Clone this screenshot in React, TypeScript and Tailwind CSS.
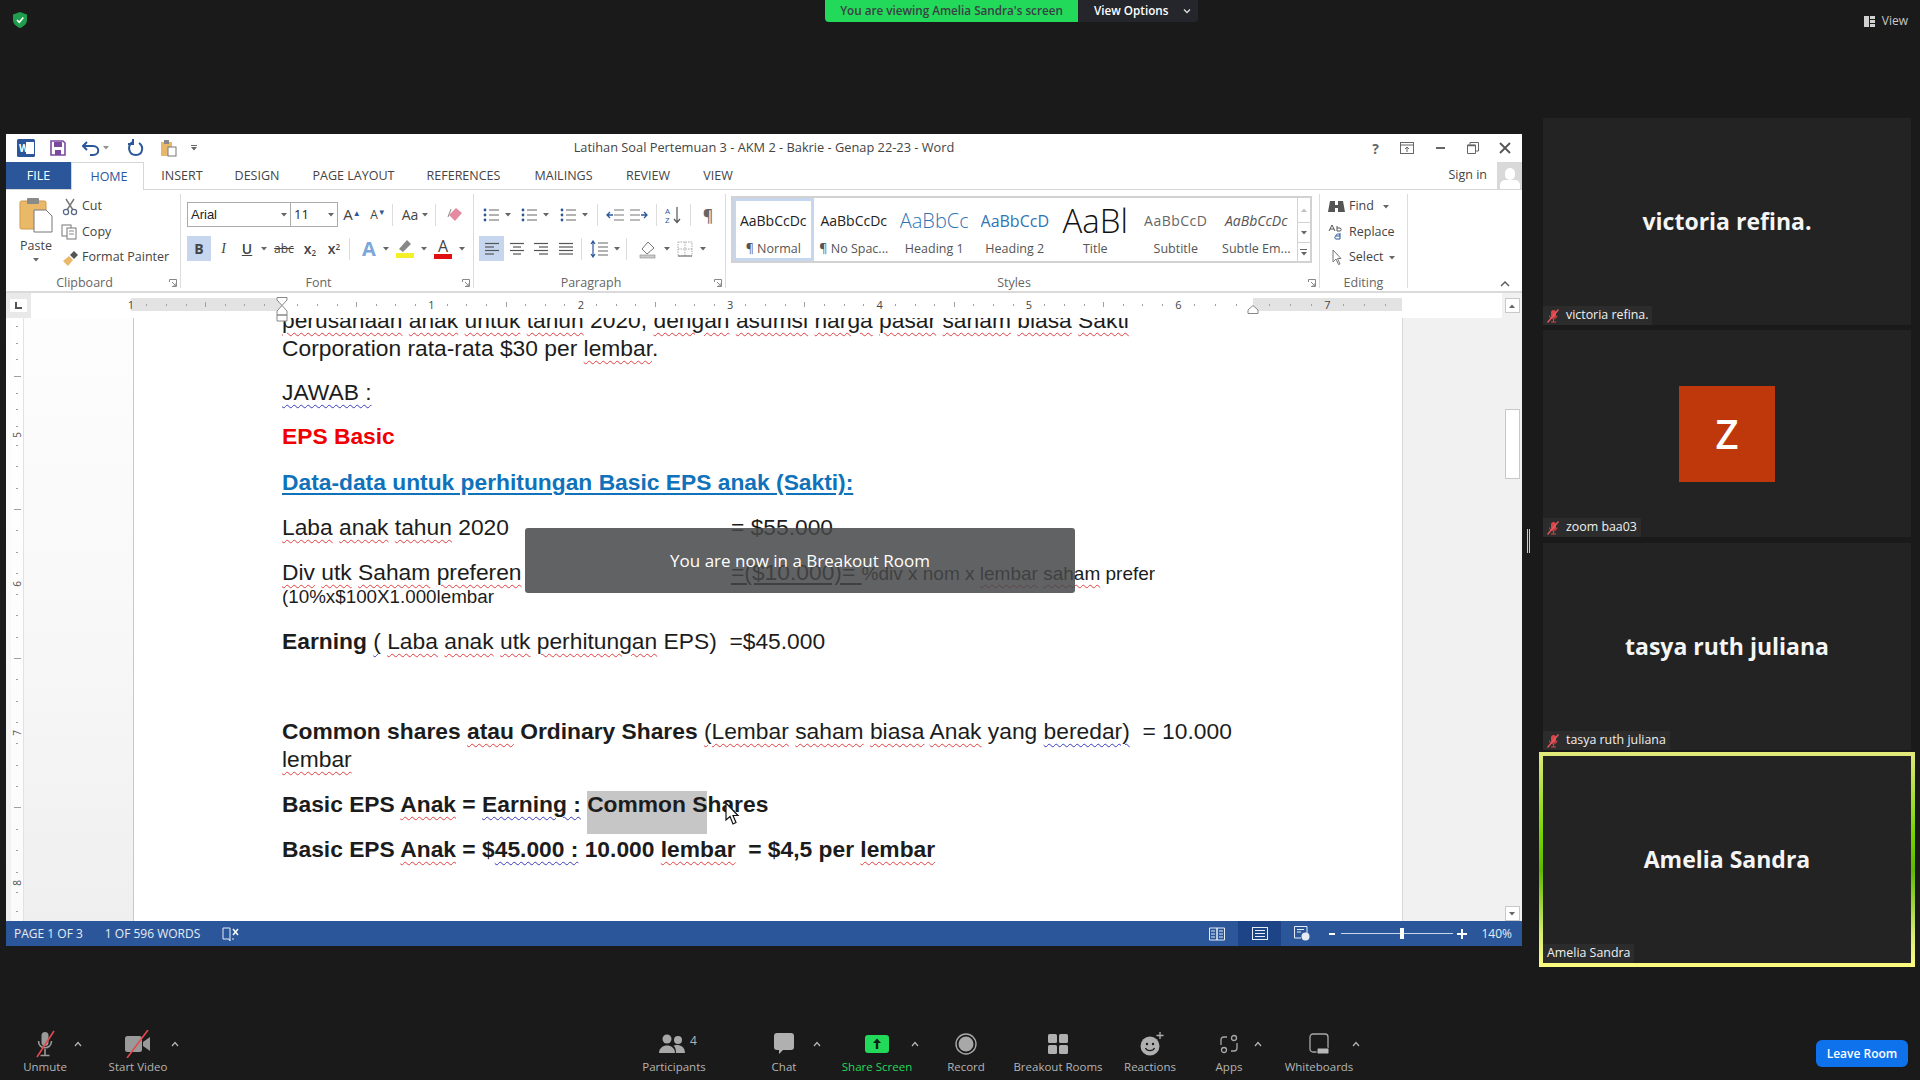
import React from "react";

const wavyRed = "underline decoration-wavy decoration-[#e04040] decoration-1 underline-offset-[4px]";
const wavyBlue = "underline decoration-wavy decoration-[#3a3ac0] decoration-1 underline-offset-[4px]";

function Caret() {
  return (
    <svg width="8" height="6" viewBox="0 0 8 6" className="shrink-0">
      <path d="M1 5 L4 1.5 L7 5" fill="none" stroke="#b5b5b5" strokeWidth="1.2" />
    </svg>
  );
}

function DropArrow({ className = "" }: { className?: string }) {
  return (
    <svg width="6" height="4" viewBox="0 0 6 4" className={className}>
      <path d="M0 0 H6 L3 3.5 Z" fill="#666" />
    </svg>
  );
}

function Slash() {
  return <path d="M21 1 L4 27" stroke="#e5484d" strokeWidth="1.6" />;
}

function MutedSmall() {
  return (
    <svg width="14" height="14" viewBox="0 0 14 14" className="shrink-0">
      <rect x="5" y="1" width="5" height="8" rx="2.5" fill="#d9454a" />
      <path d="M3.5 6.5 C3.5 11 11 11 11 6.5 M7.5 10 V13 M5 13 H10" fill="none" stroke="#d9454a" strokeWidth="1" />
      <path d="M12.5 0.5 L1.5 13.5" stroke="#e8585c" strokeWidth="1.3" />
    </svg>
  );
}

function ToolItem({ label, width, ml = "", green, children }: { label: string; width: string; ml?: string; green?: boolean; children: React.ReactNode }) {
  return (
    <div className={`flex flex-col items-center shrink-0 ${width} ${ml}`}>
      <div className="h-[24px] flex items-center justify-center">{children}</div>
      <div className={`mt-[3px] text-[11.5px] leading-[16px] whitespace-nowrap ${green ? "text-[#23d959]" : "text-[#b4b4b4]"}`}>{label}</div>
    </div>
  );
}

function Toolbar() {
  return (
    <div className="h-[60px] flex items-start pt-[12px] pl-[15px] font-['Open_Sans',sans-serif]">
      <ToolItem label="Unmute" width="w-[60px]">
        <svg width="24" height="28" viewBox="0 0 24 28">
          <rect x="8.5" y="2" width="7" height="14" rx="3.5" fill="#9a9a9a" />
          <path d="M5.5 11 C5.5 20 18.5 20 18.5 11 M12 19 V25 M7.5 25.5 H16.5" fill="none" stroke="#9a9a9a" strokeWidth="1.6" />
          <Slash />
        </svg>
      </ToolItem>
      <div className="w-[6px] h-[24px] flex items-center justify-center"><Caret /></div>
      <ToolItem label="Start Video" width="w-[66px]" ml="ml-[24px]">
        <svg width="26" height="28" viewBox="0 0 26 28">
          <rect x="0" y="6" width="17" height="16" rx="2.5" fill="#9a9a9a" />
          <path d="M18 12 L25 7 V21 L18 16 Z" fill="#9a9a9a" />
          <path d="M23 0 L2 28" stroke="#e5484d" strokeWidth="1.6" />
        </svg>
      </ToolItem>
      <div className="w-[8px] h-[24px] flex items-center justify-center"><Caret /></div>

      <ToolItem label="Participants" width="w-[90px]" ml="ml-[450px]">
        <div className="flex items-start ml-[8px]">
          <svg width="26" height="20" viewBox="0 0 26 20">
            <circle cx="8" cy="5" r="4.5" fill="#a8a8a8" />
            <circle cx="19" cy="6" r="4" fill="#a8a8a8" />
            <path d="M0 19 C0 9 16 9 16 19 Z" fill="#a8a8a8" />
            <path d="M17 19 C17 14 15.5 12.5 14.5 12 C17 10 26 10.5 26 19 Z" fill="#a8a8a8" />
          </svg>
          <span className="ml-[5px] text-[12px] leading-[14px] text-[#b4b4b4]">4</span>
        </div>
      </ToolItem>
      <ToolItem label="Chat" width="w-[50px]" ml="ml-[40px]">
        <svg width="22" height="24" viewBox="0 0 22 24">
          <path d="M4 1 H18 C20 1 21 2 21 4 V15 C21 17 20 18 18 18 H10 L6 22 V18 H4 C2 18 1 17 1 15 V4 C1 2 2 1 4 1 Z" fill="#b0b0b0" />
        </svg>
      </ToolItem>
      <div className="w-[8px] h-[24px] ml-[4px] flex items-center justify-center"><Caret /></div>
      <ToolItem label="Share Screen" width="w-[68px]" ml="ml-[22px]" green>
        <svg width="24" height="18" viewBox="0 0 24 18">
          <rect width="24" height="18" rx="3" fill="#23d959" />
          <path d="M12 3.5 L16 8 H13.2 V14 H10.8 V8 H8 Z" fill="#102018" />
        </svg>
      </ToolItem>
      <div className="w-[8px] h-[24px] flex items-center justify-center"><Caret /></div>
      <ToolItem label="Record" width="w-[40px]" ml="ml-[27px]">
        <svg width="22" height="22" viewBox="0 0 22 22">
          <circle cx="11" cy="11" r="10" fill="none" stroke="#a8a8a8" strokeWidth="1.4" />
          <circle cx="11" cy="11" r="7.5" fill="#a8a8a8" />
        </svg>
      </ToolItem>
      <ToolItem label="Breakout Rooms" width="w-[90px]" ml="ml-[27px]">
        <svg width="20" height="20" viewBox="0 0 20 20">
          <rect x="0" y="0" width="9" height="9" rx="1.5" fill="#b0b0b0" />
          <rect x="11" y="0" width="9" height="9" rx="1.5" fill="#b0b0b0" />
          <rect x="0" y="11" width="9" height="9" rx="1.5" fill="#b0b0b0" />
          <rect x="11" y="11" width="9" height="9" rx="1.5" fill="#b0b0b0" />
        </svg>
      </ToolItem>
      <ToolItem label="Reactions" width="w-[60px]" ml="ml-[17px]">
        <svg width="24" height="24" viewBox="0 0 24 24" className="ml-[3px]">
          <circle cx="10" cy="14" r="9.5" fill="#b0b0b0" />
          <circle cx="7" cy="12" r="1.2" fill="#1a1a1a" />
          <circle cx="13" cy="12" r="1.2" fill="#1a1a1a" />
          <path d="M5.5 16 C7 19.5 13 19.5 14.5 16" fill="none" stroke="#1a1a1a" strokeWidth="1.2" />
          <path d="M20 0 V7 M16.5 3.5 H23.5" stroke="#b0b0b0" strokeWidth="1.3" />
        </svg>
      </ToolItem>
      <ToolItem label="Apps" width="w-[40px]" ml="ml-[29px]">
        <svg width="18" height="20" viewBox="0 0 18 20">
          <path d="M7 3 H4 C2 3 1 4 1 6 V11 M17 9 V14 C17 16 16 17 14 17 H11" fill="none" stroke="#a8a8a8" strokeWidth="1.3" />
          <circle cx="14" cy="4" r="2.5" fill="none" stroke="#a8a8a8" strokeWidth="1.3" />
          <circle cx="4" cy="16" r="2.5" fill="none" stroke="#a8a8a8" strokeWidth="1.3" />
        </svg>
      </ToolItem>
      <div className="w-[8px] h-[24px] ml-[5px] flex items-center justify-center"><Caret /></div>
      <ToolItem label="Whiteboards" width="w-[66px]" ml="ml-[24px]">
        <svg width="21" height="22" viewBox="0 0 21 22">
          <rect x="1" y="1" width="18" height="18" rx="3" fill="none" stroke="#a8a8a8" strokeWidth="1.3" />
          <rect x="8" y="15" width="12" height="6" rx="1.5" fill="#b8b8b8" stroke="#1a1a1a" />
        </svg>
      </ToolItem>
      <div className="w-[8px] h-[24px] flex items-center justify-center"><Caret /></div>
      <div className="ml-auto mr-[12px] mt-[8px] w-[92px] h-[27px] rounded-[6px] bg-[#0e72ed] text-white text-[12px] font-semibold flex items-center justify-center">Leave Room</div>
    </div>
  );
}

function Tile({ name, children }: { name: string; children?: React.ReactNode }) {
  return (
    <div className="relative mx-[4px] h-[207px] bg-[#232323] flex items-center justify-center">
      {children ?? <div className="text-[23px] font-bold text-[#f5f5f5] -mt-[1px]">{name}</div>}
      <div className="absolute left-0 bottom-0 h-[19px] pl-[3px] pr-[4px] flex items-center gap-[6px] bg-[#2c2c2c] text-[12.4px] text-[#f0f0f0]">
        <MutedSmall />
        <span>{name}</span>
      </div>
    </div>
  );
}

function Sidebar() {
  return (
    <div className="w-[376px] flex flex-col font-['Open_Sans',sans-serif]">
      <Tile name="victoria refina." />
      <div className="mt-[5px]">
        <Tile name="zoom baa03">
          <div className="w-[96px] h-[96px] bg-[#bf380b] flex items-center justify-center text-[40px] font-semibold text-white">Z</div>
        </Tile>
      </div>
      <div className="mt-[6px]">
        <Tile name="tasya ruth juliana" />
      </div>
      <div className="mt-[2px] h-[215px] p-[4px] bg-[linear-gradient(#e2ea7c_0%,#78d400_38%,#5fb800_55%,#d8ec70_85%,#fdfd80_100%)]">
        <div className="relative h-full bg-[#232323] flex items-center justify-center">
          <div className="text-[23px] font-bold text-[#f5f5f5]">Amelia Sandra</div>
          <div className="absolute left-0 bottom-0 h-[19px] px-[4px] flex items-center bg-[#2c2c2c] text-[12.4px] text-[#f0f0f0]">Amelia Sandra</div>
        </div>
      </div>
    </div>
  );
}

function Cell({ w, children, on }: { w: string; children: React.ReactNode; on?: boolean }) {
  return <div className={`${w} h-[25px] shrink-0 flex items-center justify-center ${on ? "bg-[#c5d6ee]" : ""}`}>{children}</div>;
}

function LinesIcon({ lines }: { lines: [number, number][] }) {
  return (
    <svg width="16" height="14" viewBox="0 0 16 14">
      {lines.map(([a, b], i) => (
        <path key={i} d={`M${a} ${1.5 + i * 3.5} H${b}`} stroke="#555" strokeWidth="1.2" />
      ))}
    </svg>
  );
}

function ListIcon({ color = "#2b579a" }: { color?: string }) {
  return (
    <svg width="16" height="14" viewBox="0 0 16 14">
      <circle cx="2" cy="2" r="1.4" fill={color} />
      <circle cx="2" cy="7" r="1.4" fill={color} />
      <circle cx="2" cy="12" r="1.4" fill={color} />
      <path d="M6 2 H16 M6 7 H16 M6 12 H16" stroke="#666" strokeWidth="1.2" />
    </svg>
  );
}

function Sep({ ml = "" }: { ml?: string }) {
  return <div className={`w-px h-[22px] bg-[#dcdcdc] shrink-0 ${ml}`} />;
}

function GroupLabel({ text, launcher = true }: { text: string; launcher?: boolean }) {
  return (
    <div className={`absolute left-0 right-0 bottom-[-4px] h-[18px] text-center text-[12.5px] leading-[18px] text-[#666] ${launcher ? "pr-[17px]" : ""}`}>
      {text}
      {launcher && (
        <svg width="8" height="8" viewBox="0 0 8 8" className="absolute right-[3px] top-[5px]">
          <path d="M0.5 3 V0.5 H7.5 V7.5 H3 M3 3 L7 7 M4 7 H7 V4" fill="none" stroke="#888" />
        </svg>
      )}
    </div>
  );
}

function Clipboard() {
  return (
    <div className="relative w-[175px] h-full shrink-0 border-r border-[#dcdcdc] mt-[4px] flex pl-[12px] text-[12.5px] text-[#444]">
      <div className="w-[36px] flex flex-col items-center mt-[3px]">
        <svg width="34" height="36" viewBox="0 0 34 36">
          <rect x="1" y="4" width="26" height="28" rx="1.5" fill="#eab968" stroke="#c99a4c" />
          <rect x="8" y="1" width="12" height="6" rx="1" fill="#8a8a8a" />
          <path d="M15 13 H27 L33 19 V35 H15 Z" fill="#fff" stroke="#777" />
        </svg>
        <div className="mt-[5px] leading-[16px]">Paste</div>
        <DropArrow className="mt-[4px]" />
      </div>
      <div className="ml-[7px] flex flex-col">
        <div className="h-[25px] flex items-center gap-[3px]">
          <svg width="18" height="18" viewBox="0 0 18 18"><path d="M5 1 L12 12 M13 1 L6 12" stroke="#777" strokeWidth="1.4" /><circle cx="5" cy="14" r="2.6" fill="none" stroke="#5a6a85" strokeWidth="1.3" /><circle cx="13" cy="14" r="2.6" fill="none" stroke="#5a6a85" strokeWidth="1.3" /></svg>
          <span>Cut</span>
        </div>
        <div className="h-[26px] flex items-center gap-[3px]">
          <svg width="18" height="16" viewBox="0 0 18 16"><rect x="1" y="1" width="9" height="11" fill="#fff" stroke="#777" /><rect x="6" y="4" width="9" height="11" fill="#fff" stroke="#777" /><path d="M8 7 H13 M8 10 H13" stroke="#888" /></svg>
          <span>Copy</span>
        </div>
        <div className="h-[25px] flex items-center gap-[3px]">
          <svg width="18" height="18" viewBox="0 0 18 18"><path d="M2 12 L8 7 L12 11 L7 17 Z" fill="#eab968" /><path d="M9 6 L13 2 L17 6 L13 10 Z" fill="#555" /></svg>
          <span>Format Painter</span>
        </div>
      </div>
      <GroupLabel text="Clipboard" />
    </div>
  );
}

function FontGroup() {
  return (
    <div className="relative w-[293px] h-full shrink-0 border-r border-[#dcdcdc] mt-[4px] pl-[6px] pt-[8px] text-[#444]">
      <div className="flex items-center h-[25px]">
        <div className="w-[104px] h-[25px] border border-[#ababab] flex items-center justify-between px-[3px] text-[13px] font-['Liberation_Sans',sans-serif] text-[#222]">
          Arial <DropArrow />
        </div>
        <div className="w-[47px] h-[25px] border border-l-0 border-[#ababab] flex items-center justify-between px-[3px] text-[13px] text-[#222]">
          11 <DropArrow />
        </div>
        <Cell w="w-[28px]"><span className="text-[15px]">A<sup className="text-[8px] text-[#2b579a]">▲</sup></span></Cell>
        <Cell w="w-[24px]"><span className="text-[12px]">A<sup className="text-[8px] text-[#2b579a]">▼</sup></span></Cell>
        <Sep ml="mx-[2px]" />
        <Cell w="w-[40px]"><span className="text-[14px]">Aa</span><DropArrow className="ml-[4px]" /></Cell>
        <Sep ml="mr-[4px]" />
        <Cell w="w-[30px]">
          <svg width="16" height="18" viewBox="0 0 16 18"><path d="M2 9 L9 2 L15 7 L8 15 Z" fill="#e58ba0" /><path d="M4 3 L1 11" stroke="#888" /></svg>
        </Cell>
      </div>
      <div className="flex items-center h-[25px] mt-[9px] text-[14px]">
        <Cell w="w-[24px]" on><b>B</b></Cell>
        <Cell w="w-[25px]"><i className="font-['Liberation_Serif',serif]">I</i></Cell>
        <Cell w="w-[22px]"><u className="font-semibold">U</u></Cell>
        <Cell w="w-[12px]"><DropArrow /></Cell>
        <Cell w="w-[28px]"><span className="text-[12px] line-through">abc</span></Cell>
        <Cell w="w-[24px]"><span className="font-semibold">x<sub className="text-[8px]">2</sub></span></Cell>
        <Cell w="w-[24px]"><span className="font-semibold">x<sup className="text-[8px]">2</sup></span></Cell>
        <Sep ml="ml-[3px] mr-[6px]" />
        <Cell w="w-[26px]"><span className="text-[20px] text-[#7ba6da] font-bold">A</span></Cell>
        <Cell w="w-[8px]"><DropArrow /></Cell>
        <Cell w="w-[30px]">
          <svg width="20" height="22" viewBox="0 0 20 22"><path d="M4 11 L12 2 L16 6 L8 14 Z" fill="#888" /><rect x="1" y="15" width="18" height="5" fill="#f5ef2a" /></svg>
        </Cell>
        <Cell w="w-[8px]"><DropArrow /></Cell>
        <Cell w="w-[30px]">
          <div className="flex flex-col items-center leading-[15px]"><span className="text-[16px]">A</span><span className="w-[18px] h-[5px] bg-[#e01010]" /></div>
        </Cell>
        <Cell w="w-[8px]"><DropArrow /></Cell>
      </div>
      <GroupLabel text="Font" />
    </div>
  );
}

function ParagraphGroup() {
  return (
    <div className="relative w-[252px] h-full shrink-0 border-r border-[#dcdcdc] mt-[4px] pl-[5px] pt-[8px] text-[#444]">
      <div className="flex items-center h-[25px]">
        <Cell w="w-[24px]"><ListIcon /></Cell>
        <Cell w="w-[10px]"><DropArrow /></Cell>
        <div className="w-[4px]" />
        <Cell w="w-[24px]"><ListIcon /></Cell>
        <Cell w="w-[10px]"><DropArrow /></Cell>
        <div className="w-[5px]" />
        <Cell w="w-[24px]"><ListIcon /></Cell>
        <Cell w="w-[10px]"><DropArrow /></Cell>
        <Sep ml="ml-[7px] mr-[5px]" />
        <Cell w="w-[24px]">
          <svg width="18" height="14" viewBox="0 0 18 14"><path d="M8 2 H18 M8 7 H18 M8 12 H18" stroke="#777" /><path d="M1 7 H7 M4 4 L1 7 L4 10" fill="none" stroke="#2b579a" strokeWidth="1.3" /></svg>
        </Cell>
        <Cell w="w-[24px]">
          <svg width="18" height="14" viewBox="0 0 18 14"><path d="M0 2 H10 M0 7 H10 M0 12 H10" stroke="#777" /><path d="M11 7 H17 M14 4 L17 7 L14 10" fill="none" stroke="#2b579a" strokeWidth="1.3" /></svg>
        </Cell>
        <Sep ml="ml-[5px] mr-[4px]" />
        <Cell w="w-[24px]">
          <svg width="18" height="18" viewBox="0 0 18 18"><text x="1" y="8" fontSize="8" fill="#2b579a">A</text><text x="1" y="17" fontSize="8" fill="#2b579a">Z</text><path d="M13 1 V16 M10 13 L13 16.5 L16 13" fill="none" stroke="#555" strokeWidth="1.2" /></svg>
        </Cell>
        <Sep ml="ml-[5px] mr-[5px]" />
        <Cell w="w-[24px]"><span className="text-[16px] font-semibold text-[#666]">¶</span></Cell>
      </div>
      <div className="flex items-center h-[25px] mt-[9px]">
        <Cell w="w-[25px]" on><LinesIcon lines={[[1, 15], [1, 10], [1, 15], [1, 10]]} /></Cell>
        <Cell w="w-[25px]"><LinesIcon lines={[[1, 15], [4, 12], [1, 15], [4, 12]]} /></Cell>
        <Cell w="w-[24px]"><LinesIcon lines={[[1, 15], [6, 15], [1, 15], [6, 15]]} /></Cell>
        <Cell w="w-[25px]"><LinesIcon lines={[[1, 15], [1, 15], [1, 15], [1, 15]]} /></Cell>
        <Sep ml="ml-[3px] mr-[4px]" />
        <Cell w="w-[26px]">
          <svg width="18" height="18" viewBox="0 0 18 18"><path d="M3 1 V17 M1 4 L3 1 L5 4 M1 14 L3 17 L5 14" fill="none" stroke="#2b579a" strokeWidth="1.2" /><path d="M8 3 H18 M8 7 H18 M8 11 H18 M8 15 H18" stroke="#666" /></svg>
        </Cell>
        <Cell w="w-[10px]"><DropArrow /></Cell>
        <Sep ml="ml-[4px] mr-[7px]" />
        <Cell w="w-[28px]">
          <svg width="20" height="20" viewBox="0 0 20 20"><path d="M4 10 L10 3 L16 9 L9 15 Z" fill="#fff" stroke="#777" /><rect x="2" y="16" width="15" height="3" fill="#ccc" stroke="#888" strokeWidth=".6" /></svg>
        </Cell>
        <Cell w="w-[10px]"><DropArrow /></Cell>
        <Cell w="w-[26px]">
          <svg width="16" height="16" viewBox="0 0 16 16"><rect x="1" y="1" width="14" height="14" fill="none" stroke="#aaa" strokeDasharray="1.5 1" /><path d="M8 1 V15 M1 8 H15" stroke="#aaa" strokeDasharray="1.5 1" /><path d="M1 15 H15" stroke="#666" /></svg>
        </Cell>
        <Cell w="w-[10px]"><DropArrow /></Cell>
      </div>
      <GroupLabel text="Paragraph" />
    </div>
  );
}

const styleItems = [
  { label: "¶ Normal", cls: "text-[14px] text-[#222]", sample: "AaBbCcDc" },
  { label: "¶ No Spac...", cls: "text-[14px] text-[#222]", sample: "AaBbCcDc" },
  { label: "Heading 1", cls: "text-[20px] text-[#2e74b5] font-light", sample: "AaBbCc" },
  { label: "Heading 2", cls: "text-[16px] text-[#2e74b5]", sample: "AaBbCcD" },
  { label: "Title", cls: "text-[33px] text-[#111] font-light", sample: "AaBl" },
  { label: "Subtitle", cls: "text-[14px] tracking-[0.5px] text-[#666]", sample: "AaBbCcD" },
  { label: "Subtle Em...", cls: "text-[14px] italic text-[#555]", sample: "AaBbCcDc" },
];

function StylesGroup() {
  return (
    <div className="relative w-[594px] h-full shrink-0 border-r border-[#dcdcdc] mt-[4px] pl-[5px] pt-[2px] text-[#555]">
      <div className="w-[581px] h-[67px] border-2 border-[#d2d2d2] flex">
        <div className="flex flex-1">
          {styleItems.map((s, i) => (
            <div key={s.label} className={`w-[80.5px] h-[63px] shrink-0 flex flex-col items-center overflow-hidden ${i === 0 ? "border-[3px] border-[#c5d6ee]" : "border-[3px] border-transparent"}`}>
              <div className={`h-[39px] w-[68px] overflow-hidden whitespace-nowrap flex items-center justify-center leading-none ${s.cls}`}>{s.sample}</div>
              <div className="text-[12.5px] leading-[18px] whitespace-nowrap">{s.label}</div>
            </div>
          ))}
        </div>
        <div className="w-[15px] flex flex-col border-l border-[#d2d2d2]">
          <div className="h-[24px] flex items-center justify-center"><DropArrow className="rotate-180 opacity-40" /></div>
          <div className="h-[21px] border-y border-[#d2d2d2] flex items-center justify-center"><DropArrow /></div>
          <div className="flex-1 flex flex-col items-center justify-center gap-[2px]"><div className="w-[7px] h-px bg-[#666]" /><DropArrow /></div>
        </div>
      </div>
      <GroupLabel text="Styles" />
    </div>
  );
}

function EditingGroup() {
  return (
    <div className="relative w-[88px] h-full shrink-0 border-r border-[#dcdcdc] mt-[4px] pl-[8px] text-[12.5px] text-[#444]">
      <div className="h-[25px] flex items-center gap-[4px]">
        <svg width="17" height="15" viewBox="0 0 17 15"><path d="M2 2 H7 V6 H10 V2 H15 L17 13 H10 V9 H7 V13 H0 Z" fill="#555" /></svg>
        <span>Find</span><DropArrow className="ml-[5px]" />
      </div>
      <div className="h-[26px] flex items-center gap-[4px]">
        <svg width="17" height="17" viewBox="0 0 17 17"><path d="M1 7 L4 1 L7 7 M2 5 H6 M9 2 V7 H12 C13.5 7 13.5 4 12 4 H9" fill="none" stroke="#555" /><path d="M8 12 C8 9.5 11 9.5 12 11 M12 9 V15 H8 C6.5 15 6.5 12 8 12 H12" fill="none" stroke="#2b579a" /></svg>
        <span>Replace</span>
      </div>
      <div className="h-[25px] flex items-center gap-[4px]">
        <svg width="17" height="17" viewBox="0 0 17 17"><path d="M5 1 V13 L8 10 L10.5 15.5 L12 15 L9.5 9.5 H13 Z" fill="#fff" stroke="#777" /></svg>
        <span>Select</span><DropArrow className="ml-[1px]" />
      </div>
      <GroupLabel text="Editing" launcher={false} />
    </div>
  );
}

function Ticks({ count }: { count: number }) {
  const mid = Math.floor(count / 2);
  return (
    <>
      {Array.from({ length: count }).map((_, i) => (
        <div key={i} className="w-px bg-[#a0a0a0]" style={{ height: count === 7 && i === mid ? 5 : 2 }} />
      ))}
    </>
  );
}

function Inch({ half, w }: { half?: boolean; w: string }) {
  return (
    <div className={`${w} shrink-0 h-full flex items-center justify-around px-[6px]`}>
      <Ticks count={half ? 3 : 7} />
    </div>
  );
}

function RulerNum({ n }: { n: number }) {
  return <div className="w-[10px] -mx-[5px] relative flex justify-center text-[11px] leading-[13px] text-[#444]">{n}</div>;
}

function Ruler() {
  return (
    <div className="h-[25px] flex bg-white shrink-0">
      <div className="w-[25px] h-full bg-[#e9e9e9] flex items-center justify-center">
        <div className="w-[17px] h-[13px] bg-white flex items-center justify-center">
          <div className="w-[7px] h-[7px] border-l-2 border-b-2 border-[#555]" />
        </div>
      </div>
      <div className="relative ml-[100px] mt-[5px] h-[13px] flex">
        <div className="h-full bg-[#e3e3e3] w-[151px] flex">
          <RulerNum n={1} />
          <Inch w="w-[149.4px]" />
        </div>
        <div className="h-full w-[971px] flex">
          <Inch w="w-[149.4px]" /><RulerNum n={1} />
          <Inch w="w-[149.4px]" /><RulerNum n={2} />
          <Inch w="w-[149.4px]" /><RulerNum n={3} />
          <Inch w="w-[149.4px]" /><RulerNum n={4} />
          <Inch w="w-[149.4px]" /><RulerNum n={5} />
          <Inch w="w-[149.4px]" /><RulerNum n={6} />
          <Inch half w="w-[74.7px]" />
        </div>
        <div className="h-full bg-[#e3e3e3] w-[149px] flex">
          <Inch half w="w-[74.7px]" /><RulerNum n={7} /><Inch half w="w-[74.7px]" />
        </div>
        <svg width="12" height="25" viewBox="0 0 12 25" className="absolute left-[145px] top-[-1px]">
          <path d="M1 .5 H11 V3 L6 8.5 L1 3 Z M6 8.5 L11 14 V18 H1 V14 Z M1 18 H11 V24 H1 Z" fill="#fff" stroke="#888" />
        </svg>
        <svg width="12" height="9" viewBox="0 0 12 9" className="absolute left-[1116px] top-[7px]">
          <path d="M1 8.5 V5 L6 .5 L11 5 V8.5 Z" fill="#fff" stroke="#888" />
        </svg>
      </div>
    </div>
  );
}

function VSeg({ h, n }: { h: number; n?: number }) {
  return (
    <>
      <div className="flex flex-col items-center justify-around shrink-0" style={{ height: h }}>
        {Array.from({ length: h > 100 ? 7 : h > 60 ? 5 : 2 }).map((_, i) => (
          <div key={i} className="h-px bg-[#a0a0a0]" style={{ width: h > 100 && i === 3 ? 7 : 2 }} />
        ))}
      </div>
      {n && <div className="h-[12px] -my-[6px] flex items-center justify-center text-[10px] leading-[12px] text-[#555] -rotate-90">{n}</div>}
    </>
  );
}

function Doc() {
  return (
    <div className="h-[603px] flex shrink-0 overflow-hidden">
      <div className="w-[128px] shrink-0 h-full bg-[linear-gradient(#fdfdfd_0%,#f8f8f8_50%,#efefef_100%)] border-r border-[#c8c8c8] pl-[5px]">
        <div className="w-[13px] h-full bg-white/70 border-r border-[#e2e2e2] flex flex-col overflow-hidden">
          <VSeg h={117} n={5} />
          <VSeg h={149} n={6} />
          <VSeg h={149} n={7} />
          <VSeg h={150} n={8} />
          <VSeg h={38} />
        </div>
      </div>
      <div className="w-[1268px] shrink-0 h-full bg-white pl-[148px] pr-[140px] overflow-hidden font-['Liberation_Sans',sans-serif] text-[22.8px] leading-[28px] text-[#1c1c1c]">
        <div className="-mt-[12px] whitespace-nowrap">
          <span className={wavyRed}>perusahaan</span> <span className={wavyRed}>anak</span> <span className={wavyRed}>untuk</span> <span className={wavyRed}>tahun</span> 2020, <span className={wavyRed}>dengan</span> <span className={wavyRed}>asumsi</span> <span className={wavyRed}>harga</span> <span className={wavyRed}>pasar</span> <span className={wavyRed}>saham</span> <span className={wavyRed}>biasa</span> <span className={wavyRed}>Sakti</span>
        </div>
        <div className="mb-[16px]">Corporation rata-rata $30 per <span className={wavyRed}>lembar</span>.</div>
        <div className="mb-[16px]"><span className={wavyBlue}>JAWAB :</span></div>
        <div className="mb-[18px] font-bold text-[#f00000]">EPS Basic</div>
        <div className="mb-[17px] font-bold text-[#0f72ba] underline underline-offset-[3px]">Data-data untuk perhitungan Basic EPS anak (Sakti):</div>
        <div className="mb-[17px] flex">
          <div className="w-[449px]"><span className={wavyRed}>Laba</span> <span className={wavyRed}>anak</span> <span className={wavyRed}>tahun</span> 2020</div>
          <div>= $55.000</div>
        </div>
        <div className="flex items-baseline">
          <div className="w-[449px]"><span className={wavyRed}>Div</span> <span className={wavyRed}>utk</span> <span className={wavyRed}>Saham</span> <span className={wavyRed}>preferen</span></div>
          <div className="whitespace-nowrap text-[19px]"><span className="underline underline-offset-[3px] text-[22.8px]">=($10.000)= </span> %div x nom x <span className={wavyRed}>lembar</span> <span className={wavyRed}>saham</span> prefer</div>
        </div>
        <div className="text-[18.8px] leading-[24px] -mt-[3px] mb-[18px]">(10%x$100X1.000lembar</div>
        <div className="mb-[62px] flex">
          <b>Earning</b>&nbsp;<span className={wavyBlue}>(</span>&nbsp;<span className={wavyRed}>Laba</span>&nbsp;<span className={wavyRed}>anak</span>&nbsp;<span className={wavyRed}>utk</span>&nbsp;<span className={wavyRed}>perhitungan</span>&nbsp;EPS)&nbsp;&nbsp;=$45.000
        </div>
        <div className="mb-[17px]">
          <b>Common shares <span className={wavyRed}>atau</span> Ordinary Shares</b> <span className={wavyRed}>(Lembar</span> <span className={wavyRed}>saham</span> <span className={wavyRed}>biasa</span> <span className={wavyRed}>Anak</span> yang <span className={wavyBlue}>beredar)</span>&nbsp; = 10.000 <span className={wavyRed}>lembar</span>
        </div>
        <div className="mb-[17px] font-bold">
          Basic EPS <span className={wavyRed}>Anak</span> = <span className={wavyBlue}>Earning :</span> <span className="bg-[#c6c6c6] pb-[17px]">Common S</span>hares
        </div>
        <div className="font-bold">
          Basic EPS <span className={wavyRed}>Anak</span> = $<span className={wavyBlue}>45.000 :</span> 10.000 <span className={wavyRed}>lembar</span>&nbsp; = $4,5 per <span className={wavyRed}>lembar</span>
        </div>
      </div>
      <div className="w-[100px] shrink-0 h-full bg-[#f1f1f1] border-l border-[#d8d8d8]" />
    </div>
  );
}

function WordWindow() {
  return (
    <div className="ml-[6px] mt-[16px] w-[1516px] h-[812px] bg-white flex shrink-0 font-['Open_Sans',sans-serif] overflow-hidden">
      <div className="w-full flex flex-col">
        <div className="h-[28px] grid grid-cols-[1fr_auto_1fr] items-center">
          <div className="flex items-center pl-[11px]">
            <svg width="18" height="18" viewBox="0 0 18 18"><rect width="18" height="18" rx="1.5" fill="#2b579a" /><rect x="9" y="3" width="8" height="12" fill="#fff" /><text x="2" y="13" fontSize="10" fontWeight="700" fill="#fff">W</text></svg>
            <svg width="16" height="16" viewBox="0 0 16 16" className="ml-[15px]"><path d="M1 1 H13 L15 3 V15 H1 Z" fill="none" stroke="#7b4a9e" strokeWidth="1.6" /><rect x="4" y="2" width="8" height="5" fill="#7b4a9e" /><rect x="5" y="10" width="6" height="5" fill="#7b4a9e" /></svg>
            <svg width="18" height="16" viewBox="0 0 18 16" className="ml-[16px]"><path d="M1 6 H11 C18 6 18 15 11 15 H8 M5 2 L1 6 L5 10" fill="none" stroke="#2b579a" strokeWidth="2" /></svg>
            <DropArrow className="ml-[3px] opacity-70" />
            <svg width="16" height="18" viewBox="0 0 16 18" className="ml-[19px]"><path d="M5 3 C-1 6 0 16 8 16 C15 16 16 7 11 4 M5 0 V5 H0" fill="none" stroke="#2b579a" strokeWidth="2" /></svg>
            <svg width="17" height="18" viewBox="0 0 17 18" className="ml-[16px]"><rect x="1" y="3" width="11" height="14" fill="#e8b868" /><rect x="4" y="1" width="5" height="4" fill="#888" /><rect x="8" y="8" width="8" height="9" fill="#fff" stroke="#777" /></svg>
            <div className="ml-[14px] flex flex-col items-center gap-[1px]"><div className="w-[6px] h-px bg-[#666]" /><DropArrow /></div>
          </div>
          <div className="text-[12.8px] text-[#444] whitespace-nowrap">Latihan Soal Pertemuan 3 - AKM 2 - Bakrie - Genap 22-23 - Word</div>
          <div className="flex items-center justify-end pr-[11px] text-[#666]">
            <span className="text-[14px] font-bold">?</span>
            <svg width="14" height="12" viewBox="0 0 14 12" className="ml-[21px]"><rect x=".5" y=".5" width="13" height="11" fill="none" stroke="#666" /><path d="M.5 3 H13.5 M7 10 V5 M5 7 L7 5 L9 7" fill="none" stroke="#666" /></svg>
            <div className="ml-[22px] w-[9px] h-[2px] bg-[#666]" />
            <svg width="12" height="12" viewBox="0 0 12 12" className="ml-[22px]"><path d="M3 2.5 V.5 H11.5 V9 H9 M.5 3 H8.5 V11.5 H.5 Z" fill="none" stroke="#666" /><path d="M.5 3.5 H8.5" stroke="#666" strokeWidth="1.5" /></svg>
            <svg width="12" height="12" viewBox="0 0 12 12" className="ml-[20px]"><path d="M1 1 L11 11 M11 1 L1 11" stroke="#555" strokeWidth="1.8" /></svg>
          </div>
        </div>
        <div className="h-[28px] flex items-stretch border-b border-[#d6d6d6] text-[12.5px] text-[#444] shrink-0">
          <div className="w-[65px] bg-[#2b579a] text-white flex items-center justify-center pt-[1px]">FILE</div>
          <div className="w-[73px] h-[28px] pl-[3px] pt-[1px] bg-white border border-b-0 border-[#d6d6d6] text-[#2b579a] flex items-center justify-center">HOME</div>
          <div className="w-[76px] pt-[1px] flex items-center justify-center">INSERT</div>
          <div className="w-[74px] pt-[1px] flex items-center justify-center">DESIGN</div>
          <div className="w-[119px] pt-[1px] flex items-center justify-center">PAGE LAYOUT</div>
          <div className="w-[101px] pt-[1px] flex items-center justify-center">REFERENCES</div>
          <div className="w-[99px] pt-[1px] flex items-center justify-center">MAILINGS</div>
          <div className="w-[70px] pt-[1px] flex items-center justify-center">REVIEW</div>
          <div className="w-[70px] pt-[1px] flex items-center justify-center">VIEW</div>
          <div className="ml-auto flex items-center">
            <span className="mr-[10px]">Sign in</span>
            <div className="w-[25px] h-[27px] bg-[#d9d9d9] flex flex-col items-center justify-end overflow-hidden">
              <div className="w-[10px] h-[12px] rounded-full bg-white" />
              <div className="w-[20px] h-[9px] rounded-t-[5px] bg-white" />
            </div>
          </div>
        </div>
        <div className="h-[103px] flex shrink-0 border-b-2 border-[#dadada]">
          <div className="flex h-[94px]">
            <Clipboard />
            <FontGroup />
            <ParagraphGroup />
            <StylesGroup />
            <EditingGroup />
          </div>
          <div className="ml-auto mr-[12px] self-end mb-[4px]">
            <svg width="10" height="7" viewBox="0 0 10 7"><path d="M1 6 L5 2 L9 6" fill="none" stroke="#555" strokeWidth="1.4" /></svg>
          </div>
        </div>
        <div className="flex shrink-0">
          <div className="w-[1496px] flex flex-col">
            <Ruler />
            <Doc />
          </div>
          <div className="w-[20px] bg-[#f1f1f1] flex flex-col items-center pt-[5px]">
            <div className="w-[15px] h-[15px] bg-white border border-[#c8c8c8] flex items-center justify-center"><DropArrow className="rotate-180" /></div>
            <div className="w-[15px] h-[70px] mt-[96px] bg-white border border-[#c8c8c8]" />
            <div className="mt-auto w-[15px] h-[15px] bg-white border border-[#c8c8c8] flex items-center justify-center"><DropArrow /></div>
          </div>
        </div>
        <div className="h-[25px] bg-[#2b579a] flex items-center text-[12px] text-[#e6ecf5] shrink-0">
          <span className="ml-[8px]">PAGE 1 OF 3</span>
          <span className="ml-[22px]">1 OF 596 WORDS</span>
          <svg width="18" height="16" viewBox="0 0 18 16" className="ml-[22px]"><path d="M8 2 H1 V13 H7 L8 15 V2 M10 13 H12" fill="none" stroke="#e6ecf5" /><path d="M11 3 L16 9 M16 3 L11 9" stroke="#fff" strokeWidth="1.5" /></svg>
          <svg width="16" height="14" viewBox="0 0 16 14" className="ml-auto"><path d="M.5 1 H8 V13 H.5 Z M8 1 H15.5 V13 H8 Z M2 4 H6 M2 7 H6 M2 10 H6 M10 4 H14 M10 7 H14 M10 10 H14" fill="none" stroke="#e6ecf5" /></svg>
          <div className="ml-[13px] w-[43px] h-[25px] bg-[#1e4488] flex items-center justify-center">
            <svg width="16" height="13" viewBox="0 0 16 13"><rect x=".5" y=".5" width="15" height="12" fill="none" stroke="#e6ecf5" /><path d="M3 3.5 H13 M3 6.5 H13 M3 9.5 H13" stroke="#e6ecf5" /></svg>
          </div>
          <svg width="16" height="15" viewBox="0 0 16 15" className="ml-[13px]"><path d="M.5 .5 H13 V7 M.5 .5 V12 H7 M3 3.5 H10 M3 6 H7" fill="none" stroke="#e6ecf5" /><circle cx="11.5" cy="10.5" r="4" fill="#e6ecf5" /></svg>
          <div className="ml-[19px] w-[6px] h-[2px] bg-white" />
          <div className="ml-[6px] relative w-[112px] h-px bg-[#c8d4e8] flex items-center justify-center">
            <div className="absolute left-[59px] w-[4px] h-[11px] bg-white" />
          </div>
          <svg width="10" height="10" viewBox="0 0 10 10" className="ml-[4px]"><path d="M5 0 V10 M0 5 H10" stroke="#fff" strokeWidth="2" /></svg>
          <span className="ml-[14px] mr-[10px]">140%</span>
        </div>
      </div>
    </div>
  );
}

export default function App() {
  return (
    <div className="relative w-[1920px] h-[1080px] overflow-hidden bg-[#1a1a1a] flex flex-col">
      <div className="h-[118px] flex items-start shrink-0 font-['Open_Sans',sans-serif]">
        <svg width="14" height="16" viewBox="0 0 14 16" className="ml-[13px] mt-[12px] shrink-0">
          <path d="M7 0 L14 2.5 V8 C14 12 10.5 14.5 7 16 C3.5 14.5 0 12 0 8 V2.5 Z" fill="#1f9d4c" />
          <path d="M4 8 L6.3 10.3 L10.3 5.5" fill="none" stroke="#fff" strokeWidth="1.6" />
        </svg>
        <div className="ml-[798px] flex h-[22px] rounded-b-[4px] overflow-hidden text-[11.7px] font-semibold">
          <div className="w-[253px] bg-[#23d959] text-[#3a4046] flex items-center justify-center">You are viewing Amelia Sandra's screen</div>
          <div className="w-[120px] bg-[#24262b] text-white flex items-center pl-[16px]">
            View Options
            <svg width="8" height="6" viewBox="0 0 8 6" className="ml-[15px]"><path d="M1 1.5 L4 4.5 L7 1.5" fill="none" stroke="#ddd" strokeWidth="1.3" /></svg>
          </div>
        </div>
        <div className="ml-auto mr-[12px] mt-[12px] flex items-center gap-[7px] text-[12px] text-[#c8c8c8]">
          <svg width="11" height="11" viewBox="0 0 11 11"><rect width="5" height="11" fill="#d0d0d0" /><rect x="6" width="5" height="3" fill="#d0d0d0" /><rect x="6" y="4" width="5" height="3" fill="#d0d0d0" /><rect x="6" y="8" width="5" height="3" fill="#d0d0d0" /></svg>
          View
        </div>
      </div>

      <div className="h-[849px] flex shrink-0">
        <WordWindow />
        <div className="w-[17px] shrink-0 flex items-center justify-center gap-[1px] pb-[4px] pr-[4px]">
          <div className="w-px h-[24px] bg-[#c8c8c8]" />
          <div className="w-px h-[24px] bg-[#c8c8c8]" />
        </div>
        <Sidebar />
      </div>

      <div className="mt-[53px]">
        <Toolbar />
      </div>

      {/* notification over the shared screen */}
      <div className="absolute left-[525px] top-[528px] w-[550px] h-[65px] rounded-[3px] bg-[#454648]/85 flex items-center justify-center text-[17px] text-white font-['Open_Sans',sans-serif]">
        You are now in a Breakout Room
      </div>
      {/* remote mouse pointer */}
      <svg width="16" height="24" viewBox="0 0 16 24" className="absolute left-[725px] top-[802px]">
        <path d="M1 1 V18 L5 14.5 L8 22 L11 20.5 L8 13.5 H13 Z" fill="#fff" stroke="#111" strokeWidth="1.2" />
      </svg>
    </div>
  );
}
